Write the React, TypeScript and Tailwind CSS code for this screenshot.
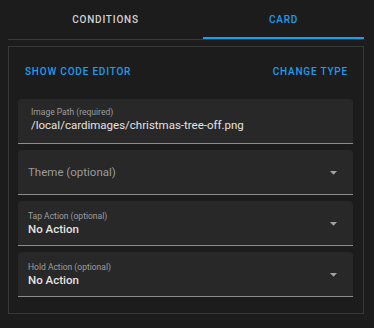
import React from "react";

const Arrow = () => (
  <svg className="h-[17px] w-[17px] text-[#a3a3a3]" viewBox="0 0 24 24" fill="currentColor">
    <path d="M7 10l5 5 5-5z" />
  </svg>
);

const SelectField = ({ label, value }: { label?: string; value: string }) => (
  <div className="flex h-[45px] items-center rounded-t-[4px] border-b border-[#8c8c8c] bg-[#282828] pl-[10px] pr-[11px]">
    <div className="flex-1">
      {label ? (
        <>
          <div className="text-[8.5px] leading-[11px] text-[#9e9e9e]">{label}</div>
          <div className="text-[11.5px] leading-[14px] font-medium text-[#e3e3e3]">{value}</div>
        </>
      ) : (
        <div className="text-[11.5px] leading-[14px] text-[#9a9a9a]">{value}</div>
      )}
    </div>
    <Arrow />
  </div>
);

export default function App() {
  return (
    <div className="h-[328px] w-[374px] bg-[#1c1c1c] pl-2 pr-[10px] font-['Roboto',sans-serif]">
      {/* Tabs */}
      <div className="flex h-[40px] border-b border-[#3a3a3a]">
        <div className="flex w-[195px] items-center justify-center text-[10px] font-medium uppercase tracking-[0.8px] text-[#d2d2d2]">
          Conditions
        </div>
        <div className="flex flex-1 flex-col">
          <div className="flex flex-1 items-center justify-center pt-[2px] text-[10px] font-medium uppercase tracking-[0.8px] text-[#1f9bf0]">
            Card
          </div>
          <div className="h-[2px] bg-[#1f9bf0]" />
        </div>
      </div>

      {/* Card editor */}
      <div className="mt-[6px] h-[268px] border border-[#383838] pl-[9px] pr-[10px]">
        <div className="flex h-[48px] items-center justify-between pl-[7px] pr-[5px] text-[10px] font-medium uppercase tracking-[0.8px] text-[#1f9bf0]">
          <span>Show code editor</span>
          <span>Change type</span>
        </div>

        <div className="mt-[4px] flex flex-col gap-[6px]">
          <div className="h-[45px] rounded-t-[4px] border-b border-[#8c8c8c] bg-[#282828] pl-[13px] pt-[8px]">
            <div className="text-[8.5px] leading-[11px] text-[#9e9e9e]">Image Path (required)</div>
            <div className="text-[11.5px] leading-[14px] text-[#e3e3e3]">/local/cardimages/christmas-tree-off.png</div>
          </div>
          <SelectField value="Theme (optional)" />
          <SelectField label="Tap Action (optional)" value="No Action" />
          <SelectField label="Hold Action (optional)" value="No Action" />
        </div>
      </div>
    </div>
  );
}
